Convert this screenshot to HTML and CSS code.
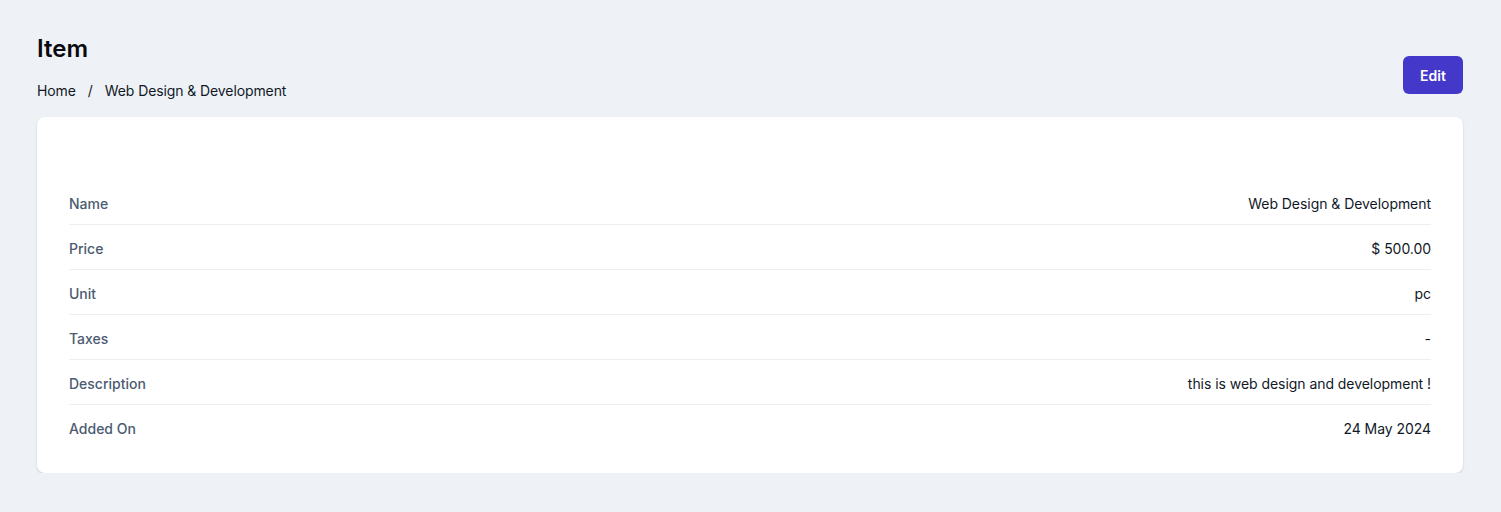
FILE: index.html
```html
<!DOCTYPE html>
<html lang="en">
<head>
<meta charset="utf-8">
<title>Item</title>
<link rel="stylesheet" href="styles.css">
</head>
<body>
<div class="page">
  <div class="page-header">
    <div class="heading">
      <h1 class="title">Item</h1>
      <nav class="breadcrumb">
        <span class="crumb">Home</span>
        <span class="sep">/</span>
        <span class="crumb">Web Design &amp; Development</span>
      </nav>
    </div>
    <button class="btn-edit">Edit</button>
  </div>
  <div class="card">
    <div class="card-head"></div>
    <dl class="details">
      <div class="row"><dt>Name</dt><dd>Web Design &amp; Development</dd></div>
      <div class="row"><dt>Price</dt><dd>$ 500.00</dd></div>
      <div class="row"><dt>Unit</dt><dd>pc</dd></div>
      <div class="row"><dt>Taxes</dt><dd>-</dd></div>
      <div class="row"><dt>Description</dt><dd>this is web design and development !</dd></div>
      <div class="row"><dt>Added On</dt><dd>24 May 2024</dd></div>
    </dl>
  </div>
</div>
</body>
</html>
```

FILE: styles.css
```css
* { box-sizing: border-box; }
html, body { margin: 0; padding: 0; }
body {
  background: #eef2f6;
  font-family: Inter, "Noto Sans", "Liberation Sans", sans-serif;
  color: #111827;
}
.page {
  padding: 33px 38px 0 37px;
}
.page-header {
  display: flex;
  justify-content: space-between;
  align-items: center;
}
.title {
  margin: 0;
  font-size: 24px;
  line-height: 32px;
  font-weight: 600;
  color: #0b0b0f;
}
.breadcrumb {
  margin-top: 16px;
  display: flex;
  font-size: 14px;
  line-height: 20px;
  color: #111827;
  letter-spacing: -0.1px;
}
.sep { margin: 0 12px; }
.btn-edit {
  margin-top: 16px;
  width: 60px;
  height: 38px;
  border: 0;
  border-radius: 6px;
  background: #4338ca;
  color: #fff;
  font-family: inherit;
  font-size: 14px;
  font-weight: 600;
}
.card {
  margin-top: 16px;
  background: #fff;
  border-radius: 8px;
  box-shadow: 0 1px 3px rgba(15, 23, 42, 0.1), 0 1px 2px rgba(15, 23, 42, 0.06);
  padding: 24px 32px 23px;
}
.card-head { height: 39px; }
.details { margin: 0; }
.row {
  display: flex;
  justify-content: space-between;
  align-items: center;
  height: 45px;
  padding-top: 2px;
  border-bottom: 1px solid #eceff3;
  font-size: 14px;
}
.row:last-child { border-bottom: 0; }
dt {
  color: #4b5b72;
  font-weight: 500;
}
dd {
  margin: 0;
  color: #111827;
  font-weight: 400;
  letter-spacing: -0.05px;
}
```
